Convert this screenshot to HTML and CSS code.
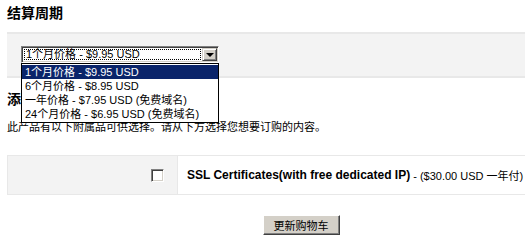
FILE: index.html
```html
<!DOCTYPE html>
<html lang="zh-CN">
<head>
<meta charset="utf-8">
<title>结算周期</title>
<link rel="stylesheet" href="styles.css">
</head>
<body>
<div class="page">
  <h2 class="title">结算周期</h2>
  <div class="cycle-box">
    <div class="select-wrap">
      <div class="select">
        <div class="select-value"><span class="focus">1个月价格 - $9.95 USD</span></div>
        <div class="select-btn"><span class="arrow"></span></div>
      </div>
      <ul class="select-list">
        <li class="sel">1个月价格 - $9.95 USD</li>
        <li>6个月价格 - $8.95 USD</li>
        <li>一年价格 - $7.95 USD (免费域名)</li>
        <li>24个月价格 - $6.95 USD (免费域名)</li>
      </ul>
    </div>
  </div>
  <h2 class="title title2">添加附加服务</h2>
  <p class="desc">此产品有以下附属品可供选择。请从下方选择您想要订购的内容。</p>
  <div class="addons">
    <div class="addon-check"><span class="checkbox"></span></div>
    <div class="addon-info"><b>SSL Certificates(with free dedicated IP)</b> - ($30.00 USD 一年付)</div>
  </div>
  <div class="actions"><button class="btn" type="button">更新购物车</button></div>
</div>
</body>
</html>
```
FILE: styles.css
```css
html, body {
  margin: 0;
  padding: 0;
  background: #fff;
  overflow: hidden;
}
body {
  font-family: "Liberation Sans", "Noto Sans CJK SC", sans-serif;
  font-size: 11px;
  color: #000;
}
.page {
  padding: 4px 0 0 7px;
  width: 588px;
}
.title {
  margin: 0;
  font-family: "Noto Sans CJK SC", sans-serif;
  font-size: 14px;
  line-height: 16px;
  font-weight: bold;
  color: #000;
}
.cycle-box {
  margin-top: 12px;
  background: #f3f3f3;
  border-top: 2px solid #e8e8e8;
  border-bottom: 2px solid #e8e8e8;
  padding: 12px 0 13px 14px;
}
.select-wrap {
  position: relative;
  width: 198px;
}
.select {
  display: flex;
  height: 17px;
  box-sizing: border-box;
  background: #fff;
  border-top: 1px solid #808080;
  border-left: 1px solid #808080;
  border-right: 1px solid #fff;
  border-bottom: 1px solid #fff;
  box-shadow: inset 1px 1px 0 #404040, inset -1px -1px 0 #d4d0c8;
  padding: 2px;
}
.select-value {
  flex: 1;
  display: flex;
}
.focus {
  flex: 1;
  outline: 1px dotted #000;
  outline-offset: -1px;
  line-height: 11px;
  padding-left: 2px;
  white-space: nowrap;
}
.select-btn {
  width: 15px;
  box-sizing: border-box;
  background: #d4d0c8;
  border-top: 1px solid #d4d0c8;
  border-left: 1px solid #d4d0c8;
  border-right: 1px solid #404040;
  border-bottom: 1px solid #404040;
  box-shadow: inset 1px 1px 0 #fff, inset -1px -1px 0 #808080;
  display: flex;
  align-items: center;
  justify-content: center;
  margin: -1px -1px -1px 1px;
}
.arrow {
  width: 0;
  height: 0;
  border-left: 4px solid transparent;
  border-right: 4px solid transparent;
  border-top: 4px solid #000;
}
.select-list {
  position: absolute;
  left: 0;
  top: 17px;
  width: 198px;
  box-sizing: border-box;
  margin: 0;
  padding: 1px 0;
  list-style: none;
  background: #fff;
  border: 1px solid #000;
  z-index: 5;
}
.select-list li {
  height: 14px;
  line-height: 14px;
  padding-left: 3px;
  white-space: nowrap;
}
.select-list li.sel {
  background: #0a246a;
  color: #fff;
}
.title2 {
  margin-top: 12px;
}
.desc {
  margin: 14px 0 0;
  font-family: "Noto Sans CJK SC", sans-serif;
  font-size: 11px;
  line-height: 13px;
}
.addons {
  margin-top: 22px;
  display: flex;
  height: 40px;
  box-sizing: border-box;
  border: 1px solid #e8e8e8;
  border-right: none;
}
.addon-check {
  width: 170px;
  background: #f3f3f3;
  border-right: 1px solid #e8e8e8;
  display: flex;
  align-items: center;
  justify-content: flex-end;
  padding-right: 13px;
  box-sizing: border-box;
}
.checkbox {
  width: 13px;
  height: 13px;
  box-sizing: border-box;
  background: #fff;
  border-top: 1px solid #808080;
  border-left: 1px solid #808080;
  border-right: 1px solid #fff;
  border-bottom: 1px solid #fff;
  box-shadow: inset 1px 1px 0 #404040, inset -1px -1px 0 #d4d0c8;
  margin-top: 1px;
}
.addon-info {
  flex: 1;
  display: flex;
  align-items: center;
  padding-left: 9px;
  white-space: nowrap;
}
.addon-info b {
  font-size: 12px;
  font-weight: bold;
  margin-right: 3px;
}
.actions {
  margin-top: 20px;
  display: flex;
  justify-content: center;
}
.btn {
  width: 77px;
  height: 20px;
  box-sizing: border-box;
  background: #d4d0c8;
  font-family: "Noto Sans CJK SC", sans-serif;
  font-size: 11px;
  color: #000;
  padding: 0;
  border-top: 1px solid #fff;
  border-left: 1px solid #fff;
  border-right: 1px solid #404040;
  border-bottom: 1px solid #404040;
  box-shadow: inset -1px -1px 0 #808080;
  line-height: 16px;
}
```
